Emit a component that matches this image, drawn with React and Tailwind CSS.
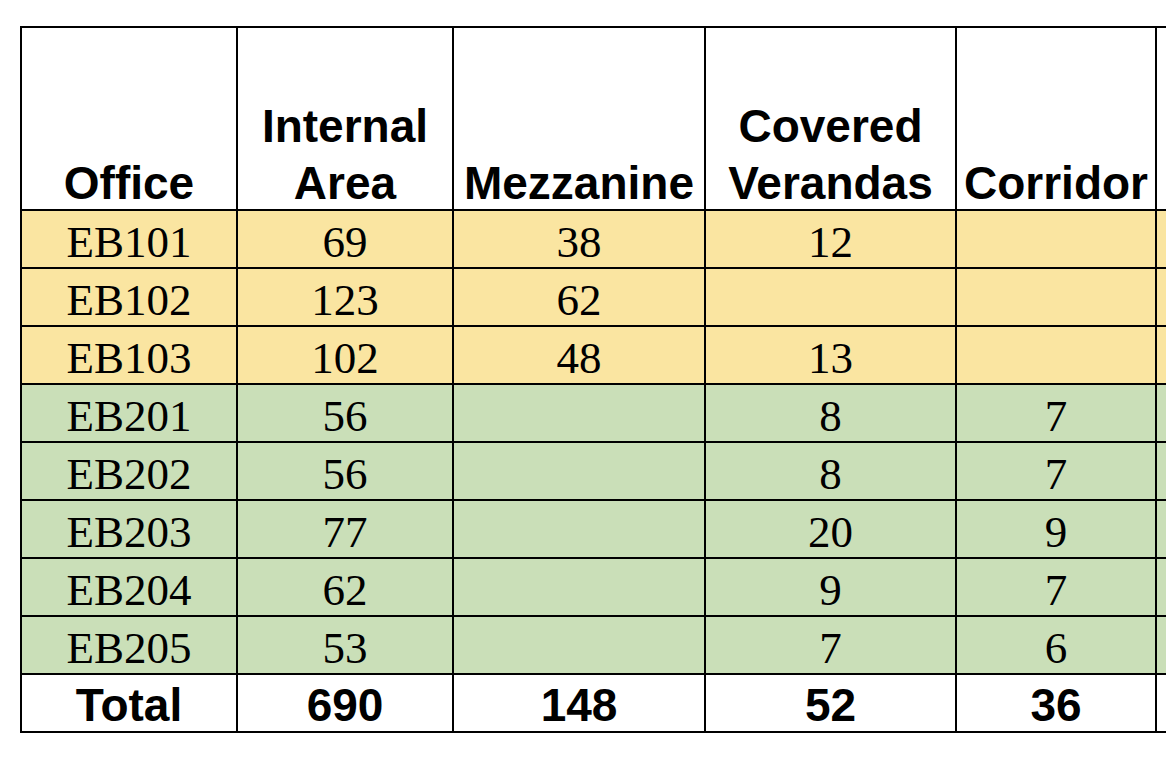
import React from 'react';

const YELLOW = 'bg-[#fae5a1]';
const GREEN = 'bg-[#cadfb8]';

const cols = ['w-[216px]', 'w-[216px]', 'w-[252px]', 'w-[251px]', 'w-[200px]', 'w-[240px]'];

const headers = [['Office'], ['Internal', 'Area'], ['Mezzanine'], ['Covered', 'Verandas'], ['Corridor'], []];

const rows = [
  { office: 'EB101', vals: ['69', '38', '12', '', ''], tone: 'yellow' },
  { office: 'EB102', vals: ['123', '62', '', '', ''], tone: 'yellow' },
  { office: 'EB103', vals: ['102', '48', '13', '', ''], tone: 'yellow' },
  { office: 'EB201', vals: ['56', '', '8', '7', ''], tone: 'green' },
  { office: 'EB202', vals: ['56', '', '8', '7', ''], tone: 'green' },
  { office: 'EB203', vals: ['77', '', '20', '9', ''], tone: 'green' },
  { office: 'EB204', vals: ['62', '', '9', '7', ''], tone: 'green' },
  { office: 'EB205', vals: ['53', '', '7', '6', ''], tone: 'green' },
];

const totals = ['Total', '690', '148', '52', '36', ''];

const sans = { fontFamily: '"Liberation Sans", Arial, sans-serif' };
const serif = { fontFamily: '"Liberation Serif", "Times New Roman", serif' };

export default function App() {
  return (
    <div className="h-screen w-full overflow-hidden bg-white">
      <div className="ml-[20px] mt-[26px] w-max border-l-2 border-t-2 border-black">
        {/* header */}
        <div className="flex">
          {headers.map((lines, i) => (
            <div
              key={i}
              className={`${cols[i]} h-[183px] shrink-0 border-r-2 border-b-2 border-black flex flex-col justify-end items-center`}
            >
              <div className="-mb-[3px] text-center text-[46px] font-bold leading-[57px] text-black whitespace-nowrap" style={sans}>
                {lines.map(l => (
                  <div key={l}>{l}</div>
                ))}
              </div>
            </div>
          ))}
        </div>

        {rows.map(r => {
          const bg = r.tone === 'yellow' ? YELLOW : GREEN;
          const cells = [r.office, ...r.vals, ''];
          return (
            <div key={r.office} className="flex">
              {cells.map((c, i) => (
                <div
                  key={i}
                  className={`${cols[i]} ${bg} h-[58px] shrink-0 border-r-2 border-b-2 border-black pt-[7px] text-center text-[45px] leading-[49px] text-black`}
                  style={serif}
                >
                  {c}
                </div>
              ))}
            </div>
          );
        })}

        {/* totals */}
        <div className="flex">
          {totals.map((t, i) => (
            <div
              key={i}
              className={`${cols[i]} h-[58px] shrink-0 bg-white border-r-2 border-b-2 border-black pt-[5px] text-center text-[46px] font-bold leading-[51px] text-black`}
              style={sans}
            >
              {t}
            </div>
          ))}
        </div>
      </div>
    </div>
  );
}
